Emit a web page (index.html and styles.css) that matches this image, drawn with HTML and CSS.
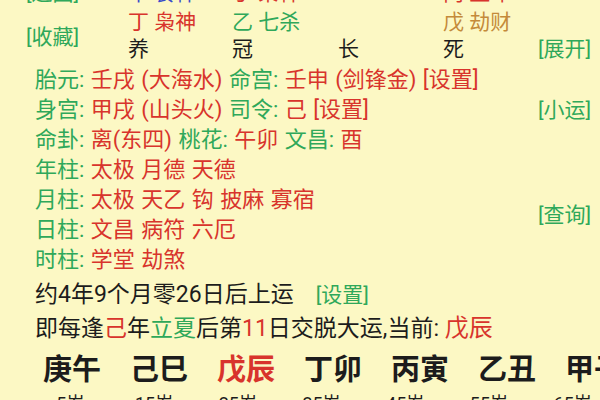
FILE: index.html
```html
<!DOCTYPE html>
<html lang="zh-CN">

<head>
  <meta charset="UTF-8">
  <meta name="viewport" content="width=device-width, initial-scale=1.0">
  <link rel="stylesheet" href="styles.css">
  <title>排盘</title>
</head>

<body>
  <div class="wrapper">
    <div class="stars">
      <div class="tag">[返回]</div>
      <div class="blue">甲 食神</div>
      <div class="red">丁 枭神</div>
      <div></div>
      <div class="red">丙 正印</div>
      <div></div>

      <div class="tag keep">[收藏]</div>
      <div class="red">丁 枭神</div>
      <div class="green">乙 七杀</div>
      <div></div>
      <div class="brown">戊 劫财</div>
      <div></div>

      <div>养</div>
      <div>冠</div>
      <div>长</div>
      <div>死</div>
      <div class="tag">[展开]</div>
    </div>

    <div class="info">
      <div class="line"><span class="green">胎元:</span> 壬戌 (大海水) <span class="green">命宫:</span> 壬申 (剑锋金) [设置]</div>
      <div class="line"><span class="green">身宫:</span> 甲戌 (山头火) <span class="green">司令:</span> 己 [设置]</div>
      <div class="line"><span class="green">命卦:</span> 离(东四) <span class="green">桃花:</span> 午卯 <span class="green">文昌:</span> 酉</div>
      <div class="line"><span class="green">年柱:</span> 太极 月德 天德</div>
      <div class="line"><span class="green">月柱:</span> 太极 天乙 钩 披麻 寡宿</div>
      <div class="line"><span class="green">日柱:</span> 文昌 病符 六厄</div>
      <div class="line"><span class="green">时柱:</span> 学堂 劫煞</div>
      <div class="tag side xiaoyun">[小运]</div>
      <div class="tag side chaxun">[查询]</div>
    </div>

    <div class="start">约4年9个月零26日后上运<span class="tag">[设置]</span></div>
    <div class="jiao">即每逢<span class="red">己</span>年<span class="green">立夏</span>后第<span class="red">11</span>日交脱大运,当前: <span class="red now">戊辰</span></div>

    <ul class="dayun">
      <li>庚午</li>
      <li>己巳</li>
      <li class="red">戊辰</li>
      <li>丁卯</li>
      <li>丙寅</li>
      <li>乙丑</li>
      <li>甲子</li>
    </ul>
    <ul class="ages">
      <li>5岁</li>
      <li>15岁</li>
      <li>25岁</li>
      <li>35岁</li>
      <li>45岁</li>
      <li>55岁</li>
      <li>65岁</li>
    </ul>
  </div>
</body>

</html>
```

FILE: styles.css
```css
* {
  margin: 0;
  padding: 0;
  list-style: none;
}

html,
body {
  width: 600px;
  height: 400px;
  overflow: hidden;
}

body {
  background-color: #fcf8c4;
  color: #1c1c1c;
  font-family: Roboto, "Noto Sans CJK SC", sans-serif;
  font-size: 21px;
}

.red {
  color: #d8342c;
}

.green {
  color: #2fa85a;
}

.blue {
  color: #3a4cc8;
}

.brown {
  color: #c48a3a;
}

.tag {
  color: #2fa85a;
}

/* 上面四柱的十神和长生 */
.stars {
  display: grid;
  grid-template-columns: 102px 104px 106px 105px 95px auto;
  grid-template-rows: 29px 27px 29px;
  margin: -20px 0 0 26px;
  line-height: 27px;
  white-space: nowrap;
}

.stars .keep {
  grid-column: 1;
  grid-row: 2 / span 2;
  align-self: center;
}

.info {
  display: grid;
  grid-template-columns: 503px auto;
  grid-auto-rows: 30px;
  padding-left: 35px;
  font-size: 22px;
  line-height: 30px;
  word-spacing: 1px;
  color: #d8342c;
  white-space: nowrap;
}

.info .line {
  grid-column: 1;
}

.info .side {
  grid-column: 2;
  font-size: 21px;
}

.info .xiaoyun {
  grid-row: 2;
}

.info .chaxun {
  grid-row: 5 / span 2;
  align-self: center;
}

.start,
.jiao {
  padding-left: 35px;
  font-size: 23px;
  line-height: 33px;
  white-space: nowrap;
}

.start {
  margin-top: 3px;
}

.start .tag {
  margin-left: 22px;
  font-size: 21px;
}

.jiao .now {
  font-size: 24px;
}

.dayun,
.ages {
  display: flex;
  padding-left: 43px;
  gap: 29px;
  white-space: nowrap;
}

.dayun {
  margin-top: 6px;
  font-size: 29px;
  font-weight: 700;
  line-height: 38px;
}

.dayun li {
  width: 58px;
}

.ages {
  font-size: 18px;
  line-height: 30px;
}

.ages li {
  width: 58px;
  text-align: center;
}
```
